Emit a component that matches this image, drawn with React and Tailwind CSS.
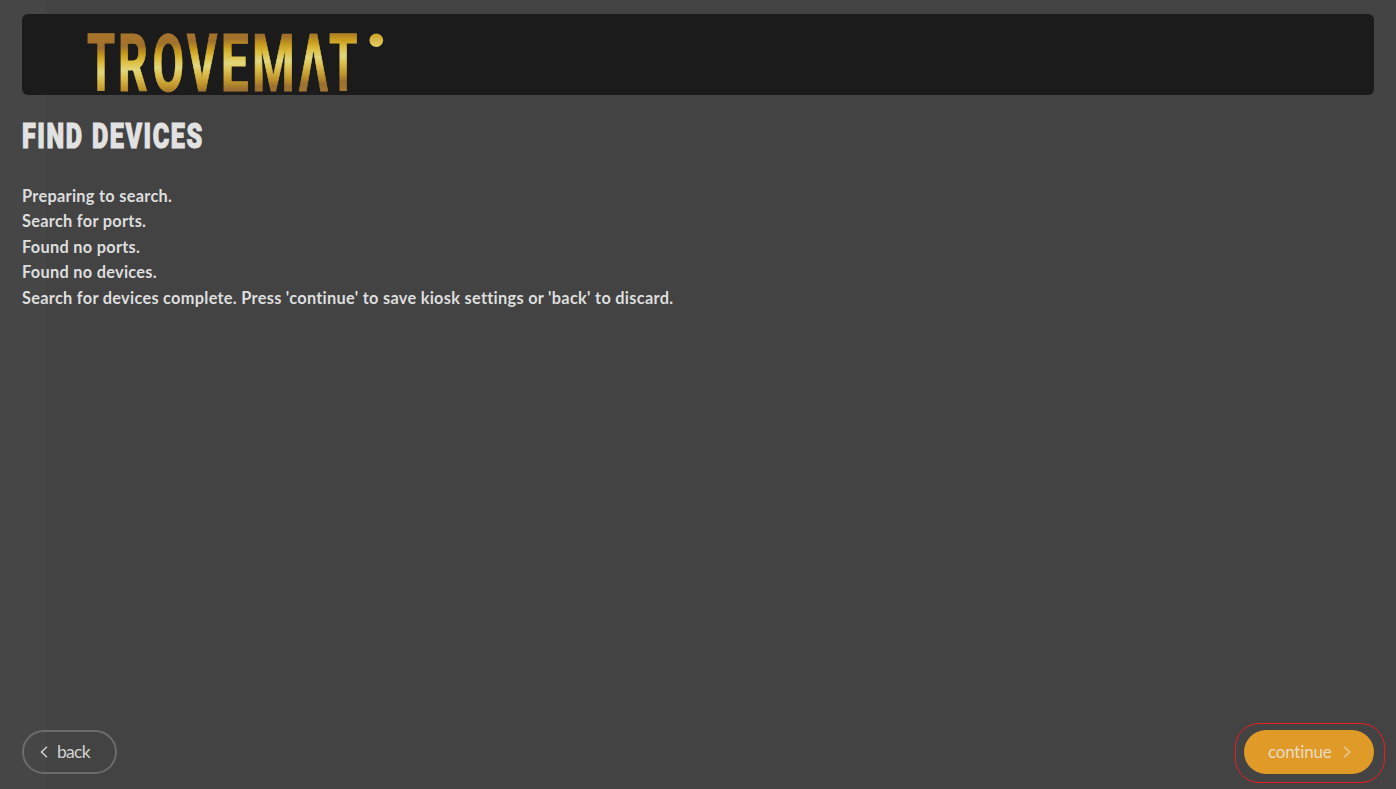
import React from "react";

const letters = [
  ["T", 88, 26.5],
  ["R", 120.7, 26.6],
  ["O", 154.5, 27],
  ["V", 187, 29.5],
  ["E", 223.7, 23.8],
  ["M", 254.7, 37],
  ["Λ", 299, 30],
  ["T", 330, 27],
];

const metrics = {
  T: [0.0195, 0.5845],
  R: [0.0576, 0.5723],
  O: [0.042, 0.59],
  V: [0.0049, 0.6299],
  E: [0.0576, 0.4766],
  M: [0.0576, 0.7564],
  "Λ": [0.0049, 0.6582],
};

const SIZE = 79.8;

function Logo() {
  return (
    <svg className="block h-[66px] w-[310px] overflow-visible" viewBox="80 30 310 66" role="img" aria-label="Trovemat">
      <defs>
        {letters.map(([, x], i) => (
          <linearGradient
            key={i}
            id={`gold${i}`}
            gradientUnits="userSpaceOnUse"
            x1="0"
            x2="0"
            y1={34 - 0.07 * (x - 95)}
            y2={110 - 0.07 * (x - 95)}
          >
            <stop offset="0" stopColor="#a9752d" />
            <stop offset="0.18" stopColor="#a1712b" />
            <stop offset="0.28" stopColor="#c5981c" />
            <stop offset="0.38" stopColor="#dcbc3c" />
            <stop offset="0.5" stopColor="#e2d77b" />
            <stop offset="0.6" stopColor="#dcbf4d" />
            <stop offset="0.75" stopColor="#bd922a" />
            <stop offset="0.84" stopColor="#9b702e" />
            <stop offset="1" stopColor="#a9772d" />
          </linearGradient>
        ))}
        <linearGradient id="dot" x1="0" x2="0" y1="0" y2="1">
          <stop offset="0" stopColor="#cba026" />
          <stop offset="1" stopColor="#e4d069" />
        </linearGradient>
      </defs>
      {letters.map(([char, x, w], i) => {
        const k = w / (metrics[char][1] * SIZE);
        const tx = x - metrics[char][0] * SIZE * k;
        return (
          <text
            key={i}
            transform={`translate(${tx} 0) scale(${k} 1)`}
            y="91"
            fontFamily="Roboto, sans-serif"
            fontWeight="700"
            fontSize={SIZE}
            fill={`url(#gold${i})`}
            stroke={`url(#gold${i})`}
            strokeWidth="1"
          >
            {char}
          </text>
        );
      })}
      <circle cx="376.3" cy="40.2" r="6.8" fill="url(#dot)" />
    </svg>
  );
}

const messages = [
  "Preparing to search.",
  "Search for ports.",
  "Found no ports.",
  "Found no devices.",
  "Search for devices complete. Press 'continue' to save kiosk settings or 'back' to discard.",
];

export default function App() {
  return (
    <main className="flex h-[789px] w-[1396px] flex-col overflow-hidden bg-[#434343] bg-[linear-gradient(to_right,#464646_46px,#434343_46px)] font-['Lato',sans-serif] text-[#dedede] [font-variant-ligatures:none]">
      <header className="mx-[22px] mt-[14px] flex h-[81px] shrink-0 rounded-md bg-[#1b1b1b] pt-4 pl-[58px]">
        <Logo />
      </header>
      <h1 className="mt-[19px] ml-[22px] h-[44px] w-max origin-left scale-x-[0.708] font-['Roboto',sans-serif] text-[35.5px] leading-[44px] font-black tracking-[2.2px] whitespace-nowrap text-[#e2e2e2] [-webkit-text-stroke:1.1px_#e2e2e2] [word-spacing:1px]">
        FIND DEVICES
      </h1>
      <div className="mt-[24.6px] ml-[22px] flex origin-left scale-x-[0.945] flex-col items-start text-[17.3px] leading-[25.6px] font-bold tracking-[0.3px] whitespace-nowrap">
        {messages.map((text) => (
          <p key={text}>{text}</p>
        ))}
      </div>
      <footer className="mt-auto mb-[6px] flex items-center justify-between pr-[11px] pl-[22px]">
        <button className="mb-[2px] flex h-11 w-[95px] items-center rounded-full border-2 border-[#6c6c6c] pl-4 text-[17.5px] text-[#d2d2d2]">
          <svg className="h-3 w-2" viewBox="0 0 8 12" fill="none" stroke="#cfcfcf" strokeWidth="1.5">
            <path d="M7 .8 1.5 6 7 11.2" />
          </svg>
          <span className="ml-[9px] pt-px tracking-[-0.7px]">back</span>
        </button>
        <div className="flex h-[60px] w-[150px] rounded-[24px] border border-[#ec1c24] pt-[6px] pl-[8px]">
          <button className="flex h-11 w-[130px] items-center rounded-full bg-[#e09a27] pl-6 text-[17px] text-[#e9dcc6]">
            <span className="w-[63px] pb-px tracking-[-0.2px] whitespace-nowrap">continue</span>
            <svg className="ml-[12px] h-3 w-2" viewBox="0 0 8 12" fill="none" stroke="#e6cda2" strokeWidth="1.4">
              <path d="M1 .8 6.8 6 1 11.2" />
            </svg>
          </button>
        </div>
      </footer>
    </main>
  );
}
